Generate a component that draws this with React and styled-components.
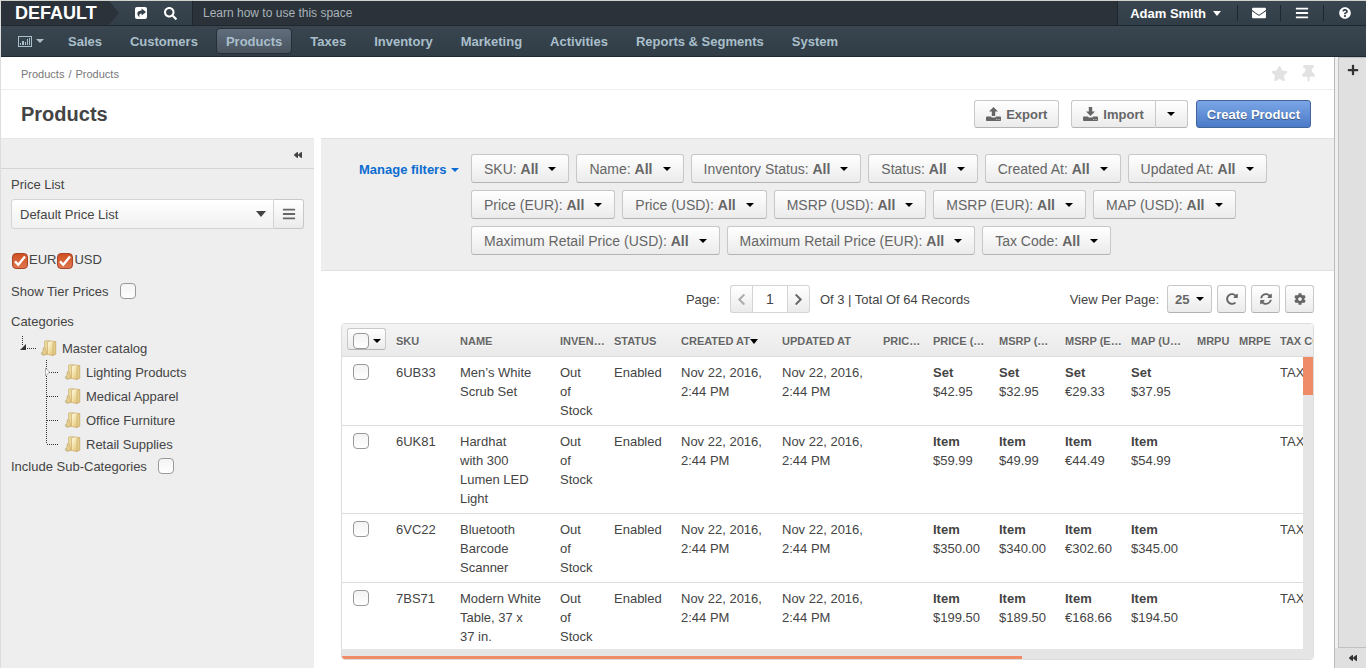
import React from "react";
import styled, { createGlobalStyle, css } from "styled-components";
import {
  FaSearch, FaEnvelope, FaBars, FaQuestionCircle, FaStar, FaThumbtack,
  FaPlus, FaCog, FaSyncAlt, FaRedoAlt, FaBackward, FaChevronLeft, FaChevronRight,
} from "react-icons/fa";

const Global = createGlobalStyle`
  *, *::before, *::after { box-sizing: border-box; }
  html, body { margin: 0; }
  body {
    font-family: "Liberation Sans", Arial, Helvetica, sans-serif;
    font-size: 13px;
    line-height: 19px;
    color: #444;
    background: #fff;
  }
  button, input, select { font: inherit; color: inherit; margin: 0; }
  a { color: inherit; text-decoration: none; }
  svg { display: block; flex: none; }
`;

/* ---------- shared controls ---------- */

const raised = css`
  border: 1px solid #c8c8c8;
  border-bottom-color: #b3b3b3;
  background: linear-gradient(#fff, #ebebeb);
`;

const Caret = styled.span`
  flex: none;
  width: 0;
  height: 0;
  border: solid transparent;
  border-width: 4px 4px 0;
  border-top-color: ${(p) => p.$color || "#000"};
`;

const Button = styled.button`
  ${raised}
  display: inline-flex;
  align-items: center;
  justify-content: center;
  gap: 5px;
  height: 28px;
  padding: 0 11px;
  border-radius: 3px;
  font-weight: bold;
  color: #666;
  white-space: nowrap;
`;

const PrimaryButton = styled(Button)`
  padding: 0 10px;
  color: #fff;
  border-color: #41659b;
  background: linear-gradient(#7ba5e6, #4b7bc8);
  text-shadow: 0 1px 1px rgba(0, 0, 0, 0.4);
`;

const SplitButton = styled.div`
  display: flex;
  & > :first-child { border-radius: 3px 0 0 3px; }
  & > :last-child { border-radius: 0 3px 3px 0; border-left: 0; }
`;

const CaretButton = styled(Button)`
  width: 32px;
  padding: 0;
`;

const BoxWrap = styled.span`
  display: inline-grid;
  flex: none;
  width: 16px;
  height: 16px;
  & > * { grid-area: 1 / 1; }
  svg { place-self: center; pointer-events: none; }
`;

const BoxInput = styled.input`
  appearance: none;
  width: 16px;
  height: 16px;
  border: 1px solid #999;
  border-radius: 4px;
  background: linear-gradient(#f3f3f3, #fff);
  &:checked {
    border-color: #a8452a;
    background: linear-gradient(#cf5022, #e0764f);
  }
`;

function CheckBox({ id, checked, label }) {
  return (
    <BoxWrap>
      <BoxInput id={id} type="checkbox" defaultChecked={checked} aria-label={label} />
      {checked && (
        <svg width="12" height="12" viewBox="0 0 12 12" fill="none" stroke="#fff" strokeWidth="2.4">
          <path d="M1 6.4 4.3 9.8 11 1.6" />
        </svg>
      )}
    </BoxWrap>
  );
}

/* ---------- drawings ---------- */

const ShareIcon = () => (
  <svg width="12" height="12" viewBox="0 0 12 12">
    <rect width="12" height="12" rx="2" fill="#fff" />
    <path d="M6.6 1.4 11 5 6.6 8.4V6.4C4.8 6.2 3.8 7.4 4.6 10.2 1.2 8 1.6 3.6 6.6 3.5Z" fill="#35424b" />
  </svg>
);

const ChartIcon = () => (
  <svg width="14" height="11" viewBox="0 0 14 11" fill="#a9bfcb">
    <path d="M0 0h14v11H0zM1 1v9h12V1z" fillRule="evenodd" />
    <path d="M2 7h1v2H2zM4 5h2v4H4zM7 6h1v3H7zM9 3h1v6H9zM11 2h1v7h-1z" />
  </svg>
);

const TrayIcon = ({ up }) => (
  <svg width="15" height="14" viewBox="0 0 15 14" fill="#666">
    <path d={up ? "M7.5 0 12 4.6H9.2V9H5.8V4.6H3Z" : "M5.8 0h3.4v4.4H12L7.5 9 3 4.4h2.8Z"} />
    <path
      d="M.8 9.6h4l1 1h3.4l1-1h4q.8 0 .8.8v2.8q0 .8-.8.8H.8q-.8 0-.8-.8v-2.8q0-.8.8-.8ZM10.2 12v.8h1V12ZM12.5 12v.8h1V12Z"
      fillRule="evenodd"
    />
  </svg>
);

const FolderIcon = () => (
  <svg width="16" height="16" viewBox="0 0 16 16">
    <defs>
      <linearGradient id="folder" x1="0" y1="0" x2="1" y2="1">
        <stop offset="0" stopColor="#fffbe2" />
        <stop offset=".5" stopColor="#f0dda0" />
        <stop offset="1" stopColor="#d3b068" />
      </linearGradient>
    </defs>
    <path d="M0 12v2.5l3 1.5 2-1V12Z" fill="#b9b3a2" opacity=".6" />
    <path d="M3.5 1 8 .5V13l-4.5.5Z" fill="#ecd9a0" stroke="#c4a866" strokeWidth=".6" />
    <path d="M3 7.5q1.6 0 1.6 1.6.2 1.4 1.2 2.2v3.4H1q-.2-2.6 1-3.6-.6-3.6 1-3.6Z" fill="#e3cc8d" stroke="#bfa05a" strokeWidth=".5" />
    <path d="M6.5 2 9 1l5.5.5V14L12 15.5l-5.5-1Z" fill="url(#folder)" stroke="#c4a45c" strokeWidth=".6" />
    <path d="M12 3 14.8 1.6V14L12 15.4Z" fill="#e6cc8c" stroke="#c0a058" strokeWidth=".5" />
  </svg>
);

/* ---------- top bar ---------- */

const Page = styled.div`
  display: flex;
  flex-direction: column;
  min-height: 560px;
  height: 100vh;
  border-top: 1px solid #d2d2cc;
  border-left: 1px solid #ddd;
`;

const TopBar = styled.header`
  display: flex;
  flex: none;
  height: 25px;
  color: #fff;
  background: linear-gradient(#39464f, #323e47);
  border-bottom: 1px solid #1f272e;
`;

const Brand = styled.a`
  display: flex;
  align-items: center;
  width: 118px;
  padding-left: 14px;
  font-size: 18px;
  font-weight: bold;
  background: #2b3239;
  clip-path: polygon(0 0, 108px 0, 118px 50%, 108px 100%, 0 100%);
`;

const QuickTools = styled.div`
  display: flex;
  align-items: center;
  gap: 17px;
  width: 73px;
  padding-left: 16px;
`;

const IconButton = styled.button`
  display: grid;
  place-items: center;
  padding: 0;
  border: 0;
  background: none;
  color: ${(p) => p.$color || "#fff"};
`;

const Tip = styled.div`
  flex: 1;
  display: flex;
  align-items: center;
  padding-left: 10px;
  font-size: 12px;
  color: #a9b2b9;
  background: #2b3239;
  border: solid #1f272e;
  border-width: 0 1px;
`;

const UserTools = styled.div`
  display: flex;
  align-items: center;
`;

const UserButton = styled.button`
  display: flex;
  align-items: center;
  gap: 7px;
  height: 16px;
  padding: 0 16px 0 12px;
  border: 0;
  background: none;
  color: #fff;
  font-weight: bold;
`;

const UserCaret = styled(Caret)`
  border-width: 5px 4px 0;
`;

const ToolButton = styled(IconButton)`
  width: 43px;
  height: 16px;
  border-left: 1px solid #1f272e;
`;

const NavBar = styled.nav`
  display: flex;
  align-items: center;
  flex: none;
  height: 31px;
  padding-left: 17px;
  font-weight: bold;
  color: #a9bfcb;
  background: linear-gradient(#39464f, #313d46);
  border-bottom: 1px solid #1f2a33;
`;

const DashButton = styled.button`
  display: flex;
  align-items: center;
  gap: 4px;
  margin-right: 10px;
  padding: 0;
  border: 0;
  background: none;
`;

const NavLink = styled.a`
  display: flex;
  align-items: center;
  height: 26px;
  margin: 0 4px;
  padding: 0 9px;
  border: 1px solid transparent;
  border-radius: 4px;
  ${(p) => p.$active && css`
    background: linear-gradient(#606d7c, #4a545f);
    border-color: #262e36;
  `}
`;

/* ---------- page frame ---------- */

const Frame = styled.div`
  display: flex;
  flex: 1;
  min-height: 0;
`;

const Content = styled.main`
  display: flex;
  flex-direction: column;
  flex: 1;
  min-width: 0;
`;

const Crumbs = styled.div`
  display: flex;
  align-items: center;
  flex: none;
  gap: 4px;
  height: 33px;
  padding: 2px 17px 0 20px;
  font-size: 11px;
  color: #777;
  border-bottom: 1px solid #eee;
`;

const CrumbTools = styled.div`
  display: flex;
  align-items: center;
  gap: 12px;
  margin-left: auto;
  padding-bottom: 2px;
`;

const TitleRow = styled.div`
  display: flex;
  align-items: center;
  flex: none;
  gap: 8px;
  height: 48px;
  padding: 0 23px 0 20px;
`;

const Title = styled.h1`
  flex: 1;
  margin: 0;
  font-size: 20px;
  line-height: 24px;
  color: #444;
`;

const Import = styled(SplitButton)`
  margin-left: 4px;
`;

const Split = styled.div`
  display: flex;
  flex: 1;
  gap: 7px;
  min-height: 0;
`;

/* ---------- left panel ---------- */

const Side = styled.aside`
  flex: none;
  width: 313px;
  background: #eee;
  border-top: 1px solid #e6e6e6;
`;

const SideTop = styled.div`
  display: flex;
  align-items: center;
  justify-content: flex-end;
  height: 30px;
  padding: 2px 12px 0;
  border-bottom: 1px solid #d4d4d4;
`;

const SideBody = styled.div`
  display: flex;
  flex-direction: column;
  padding: 6px 10px;
`;

const PriceList = styled.div`
  display: flex;
  margin-top: 5px;
  margin-bottom: 20px;
`;

const SelectWrap = styled.span`
  position: relative;
  display: inline-flex;
  ${(p) => p.$grow && "flex: 1;"}
`;

const SelectCaret = styled(Caret)`
  position: absolute;
  right: 8px;
  top: 12px;
  border-width: ${(p) => (p.$large ? "6px 5px 0" : "4px 4px 0")};
  pointer-events: none;
`;

const PriceSelect = styled.select`
  appearance: none;
  flex: 1;
  height: 30px;
  padding: 0 8px;
  border: 1px solid #d4d4d4;
  border-radius: 3px 0 0 3px;
  background: linear-gradient(#fff, #f1f1f1);
`;

const ListButton = styled(Button)`
  width: 30px;
  height: 30px;
  padding: 0;
  border-color: #c8c8c8;
  border-left: 0;
  border-radius: 0 3px 3px 0;
`;

const CheckLine = styled.div`
  display: flex;
  align-items: center;
  height: 20px;
`;

const Currencies = styled(CheckLine)`
  gap: 1px;
  padding-left: 1px;
  margin-bottom: 12px;
  ${BoxWrap} { margin-top: 4px; }
`;

const Option = styled(CheckLine)`
  gap: 11px;
`;

const SideLabel = styled.div`
  margin-top: 11px;
`;

const Tree = styled.ul`
  margin: 0;
  padding: 0;
  list-style: none;
`;

const Root = styled(Tree)`
  margin: 5px 0 0 9px;
`;

const Branch = styled(Tree)`
  padding-left: 24px;
`;

const Node = styled.a`
  display: flex;
  align-items: center;
  gap: 5px;
  height: 24px;
`;

const TreeLines = ({ kind }) => (
  <svg width="16" height="24" viewBox="0 0 16 24">
    <g stroke="#333" strokeDasharray="1 1" fill="none">
      <path d={kind === "root" ? "M2.5 0v10" : kind === "last" ? "M2.5 0v12" : "M2.5 0v24"} />
      <path d={kind === "root" ? "M7 12.5h9" : "M3 12.5h12"} />
    </g>
    {kind === "root" && <path d="M6 8v6H0Z" fill="#333" />}
    {kind === "closed" && <path d="M1.5 8v8l4-4Z" fill="#fff" stroke="#999" strokeWidth=".8" />}
  </svg>
);

/* ---------- grid panel ---------- */

const Main = styled.section`
  display: flex;
  flex-direction: column;
  flex: 1;
  min-width: 0;
`;

const Filters = styled.div`
  display: flex;
  flex: none;
  padding: 15px 20px 15px 38px;
  background: #eee;
  border: solid #e0e0e0;
  border-width: 1px 0;
`;

const ManageButton = styled.button`
  display: flex;
  align-items: center;
  gap: 5px;
  flex: none;
  width: 112px;
  height: 29px;
  padding: 2px 0 0;
  border: 0;
  background: none;
  color: #0a6cd0;
  font-weight: bold;
`;

const FilterList = styled.div`
  display: flex;
  flex-wrap: wrap;
  gap: 7px;
`;

const FilterButton = styled.button`
  ${raised}
  display: flex;
  align-items: center;
  gap: 10px;
  height: 29px;
  padding: 1px 12px 0;
  border-radius: 3px;
  font-size: 14px;
  color: #666;
  white-space: nowrap;
`;

const Toolbar = styled.div`
  display: flex;
  align-items: center;
  flex: none;
  gap: 5px;
  padding: 14px 20px 10px;
`;

const Pager = styled.div`
  display: flex;
  align-items: center;
  gap: 10px;
  margin: 0 auto;
  padding-left: 250px;
`;

const PagerBox = styled.div`
  display: flex;
  & > button { width: 22px; padding: 0; border-color: #d4d4d4; }
  & > :first-child { border-right: 0; border-radius: 3px 0 0 3px; color: #aaa; }
  & > :last-child { border-left: 0; border-radius: 0 3px 3px 0; }
`;

const PageInput = styled.input`
  width: 36px;
  height: 28px;
  border: 1px solid #d4d4d4;
  text-align: center;
  font-size: 14px;
`;

const SizeSelect = styled.select`
  ${raised}
  appearance: none;
  width: 45px;
  height: 28px;
  margin-left: 3px;
  padding: 0 7px;
  border-radius: 3px;
  font-weight: bold;
  color: #666;
`;

const SquareButton = styled(Button)`
  width: 29px;
  padding: 0;
`;

const GridBox = styled.div`
  position: relative;
  display: flex;
  flex-direction: column;
  flex: 1;
  min-height: 0;
  margin: 0 20px 8px;
  border: 1px solid #ddd;
  border-radius: 4px;
  overflow: hidden;
`;

const Scroller = styled.div`
  flex: 1;
  min-height: 0;
  overflow: hidden;
`;

const Table = styled.table`
  width: 1031px;
  table-layout: fixed;
  border-collapse: separate;
  border-spacing: 0;
`;

const Th = styled.th`
  height: 33px;
  padding: 2px 2px 0 7px;
  overflow: hidden;
  text-align: left;
  text-overflow: ellipsis;
  white-space: nowrap;
  font-size: 11px;
  color: #666;
  text-shadow: 0 1px 0 #fff;
  background: linear-gradient(#f4f4f4, #eaeaea);
  border-bottom: 1px solid #ddd;
`;

const SortMark = styled.span`
  display: inline-block;
  vertical-align: 1px;
  border: solid transparent;
  border-width: 5px 4px 0;
  border-top-color: #000;
`;

const Td = styled.td`
  padding: 6px 2px 5px 7px;
  vertical-align: top;
  white-space: pre-line;
  border-bottom: 1px solid #ddd;
`;

const PickTd = styled(Td)`
  padding: 7px 0 0 11px;
  line-height: 0;
`;

const PickAll = styled.div`
  ${raised}
  display: flex;
  align-items: center;
  gap: 4px;
  width: 39px;
  height: 22px;
  margin-left: -2px;
  margin-top: -5px;
  padding: 4px 0 0 5px;
  border-radius: 3px;
`;

const VTrack = styled.div`
  position: absolute;
  top: 33px;
  right: 0;
  bottom: 10px;
  width: 10px;
  background: #e5e5e5;
`;

const VThumb = styled.div`
  height: 38px;
  background: #f08b67;
`;

const HTrack = styled.div`
  flex: none;
  height: 10px;
  padding-top: 7px;
  background: #e5e5e5;
`;

const HThumb = styled.div`
  width: 70%;
  height: 3px;
  background: #f08b67;
`;

/* ---------- right rail ---------- */

const Rail = styled.aside`
  display: flex;
  flex-direction: column;
  flex: none;
  width: 32px;
  background: #e0e0e0;
  border-left: 1px solid #bbb;
`;

const RailBody = styled.div`
  display: flex;
  justify-content: center;
  flex: 1;
  align-items: flex-start;
  margin-left: 3px;
  padding-top: 6px;
  border: solid #c0c0c0;
  border-width: 1px 0 1px 1px;
  box-shadow: -3px 0 0 #f0eff2;
`;

const RailFoot = styled.div`
  display: flex;
  align-items: center;
  justify-content: center;
  height: 20px;
  padding-left: 5px;
`;

/* ---------- data ---------- */

const NAV = ["Sales", "Customers", "Products", "Taxes", "Inventory", "Marketing", "Activities", "Reports & Segments", "System"];

const FILTERS = [
  "SKU", "Name", "Inventory Status", "Status", "Created At", "Updated At",
  "Price (EUR)", "Price (USD)", "MSRP (USD)", "MSRP (EUR)", "MAP (USD)",
  "Maximum Retail Price (USD)", "Maximum Retail Price (EUR)", "Tax Code",
];

const CATEGORIES = [
  ["Lighting Products", "closed"],
  ["Medical Apparel", "mid"],
  ["Office Furniture", "mid"],
  ["Retail Supplies", "last"],
];

const COLUMNS = [
  ["SKU", 64], ["NAME", 100], ["INVENTORY STATUS", 54], ["STATUS", 67],
  ["CREATED AT", 101, true], ["UPDATED AT", 101], ["PRICE (EUR)", 50],
  ["PRICE (USD)", 66], ["MSRP (USD)", 66], ["MSRP (EUR)", 66], ["MAP (USD)", 66],
  ["MRPU", 42], ["MRPE", 41], ["TAX CODE", 100],
];

const ROWS = [
  ["6UB33", "Men’s White\nScrub Set", "Set", ["$42.95", "$32.95", "€29.33", "$37.95"]],
  ["6UK81", "Hardhat\nwith 300\nLumen LED\nLight", "Item", ["$59.99", "$49.99", "€44.49", "$54.99"]],
  ["6VC22", "Bluetooth\nBarcode\nScanner", "Item", ["$350.00", "$340.00", "€302.60", "$345.00"]],
  ["7BS71", "Modern White\nTable, 37 x\n37 in.", "Item", ["$199.50", "$189.50", "€168.66", "$194.50"]],
];

const DATE = "Nov 22, 2016,\n2:44 PM";

export default function App() {
  return (
    <Page>
      <Global />
      <TopBar>
        <Brand href="#">DEFAULT</Brand>
        <QuickTools>
          <IconButton aria-label="Shortcuts"><ShareIcon /></IconButton>
          <IconButton aria-label="Search"><FaSearch size={13} /></IconButton>
        </QuickTools>
        <Tip>Learn how to use this space</Tip>
        <UserTools>
          <UserButton>Adam Smith <UserCaret $color="#fff" /></UserButton>
          <ToolButton aria-label="Mail"><FaEnvelope size={14} /></ToolButton>
          <ToolButton aria-label="Menu"><FaBars size={14} /></ToolButton>
          <ToolButton aria-label="Help"><FaQuestionCircle size={12} /></ToolButton>
        </UserTools>
      </TopBar>
      <NavBar>
        <DashButton aria-label="Dashboards"><ChartIcon /><Caret $color="#a9bfcb" /></DashButton>
        {NAV.map((n) => <NavLink key={n} href="#" $active={n === "Products"}>{n}</NavLink>)}
      </NavBar>
      <Frame>
        <Content>
          <Crumbs>
            <a href="#">Products</a><span>/</span><span>Products</span>
            <CrumbTools>
              <IconButton aria-label="Favorite" $color="#e2e2e2"><FaStar size={17} /></IconButton>
              <IconButton aria-label="Pin" $color="#e2e2e2"><FaThumbtack size={17} /></IconButton>
            </CrumbTools>
          </Crumbs>
          <TitleRow>
            <Title>Products</Title>
            <Button><TrayIcon up />Export</Button>
            <Import>
              <Button><TrayIcon />Import</Button>
              <CaretButton aria-label="Import options"><Caret /></CaretButton>
            </Import>
            <PrimaryButton>Create Product</PrimaryButton>
          </TitleRow>
          <Split>
            <Side>
              <SideTop><IconButton aria-label="Collapse" $color="#444"><FaBackward size={8} /></IconButton></SideTop>
              <SideBody>
                <label htmlFor="price-list">Price List</label>
                <PriceList>
                  <SelectWrap $grow>
                    <PriceSelect id="price-list"><option>Default Price List</option></PriceSelect>
                    <SelectCaret $large $color="#444" />
                  </SelectWrap>
                  <ListButton aria-label="Choose price list"><FaBars size={14} /></ListButton>
                </PriceList>
                <Currencies>
                  <CheckBox id="eur" checked /><label htmlFor="eur">EUR</label>
                  <CheckBox id="usd" checked /><label htmlFor="usd">USD</label>
                </Currencies>
                <Option><label htmlFor="tier">Show Tier Prices</label><CheckBox id="tier" /></Option>
                <SideLabel>Categories</SideLabel>
                <Root>
                  <li>
                    <Node href="#"><TreeLines kind="root" /><FolderIcon />Master catalog</Node>
                    <Branch>
                      {CATEGORIES.map(([name, kind]) => (
                        <li key={name}><Node href="#"><TreeLines kind={kind} /><FolderIcon />{name}</Node></li>
                      ))}
                    </Branch>
                  </li>
                </Root>
                <Option><label htmlFor="sub">Include Sub-Categories</label><CheckBox id="sub" /></Option>
              </SideBody>
            </Side>
            <Main>
              <Filters>
                <ManageButton>Manage filters <Caret $color="#0a6cd0" /></ManageButton>
                <FilterList>
                  {FILTERS.map((f) => (
                    <FilterButton key={f}><span>{f}: <b>All</b></span><Caret /></FilterButton>
                  ))}
                </FilterList>
              </Filters>
              <Toolbar>
                <Pager>
                  <label htmlFor="page">Page:</label>
                  <PagerBox>
                    <Button aria-label="Previous page"><FaChevronLeft size={13} /></Button>
                    <PageInput id="page" defaultValue="1" />
                    <Button aria-label="Next page"><FaChevronRight size={13} /></Button>
                  </PagerBox>
                  <span>Of 3 | Total Of 64 Records</span>
                </Pager>
                <label htmlFor="size">View Per Page:</label>
                <SelectWrap>
                  <SizeSelect id="size"><option>25</option></SizeSelect>
                  <SelectCaret />
                </SelectWrap>
                <SquareButton aria-label="Reset"><FaRedoAlt size={12} /></SquareButton>
                <SquareButton aria-label="Refresh"><FaSyncAlt size={12} /></SquareButton>
                <SquareButton aria-label="Grid settings"><FaCog size={12} /></SquareButton>
              </Toolbar>
              <GridBox>
                <Scroller>
                  <Table>
                    <colgroup>
                      <col width="47" />
                      {COLUMNS.map(([n, w]) => <col key={n} width={w} />)}
                    </colgroup>
                    <thead>
                      <tr>
                        <Th><PickAll><CheckBox label="Select all" /><Caret /></PickAll></Th>
                        {COLUMNS.map(([n, w, sorted]) => <Th key={n}>{n}{sorted && <SortMark />}</Th>)}
                      </tr>
                    </thead>
                    <tbody>
                      {ROWS.map(([sku, name, unit, prices]) => (
                        <tr key={sku}>
                          <PickTd><CheckBox label={"Select " + sku} /></PickTd>
                          <Td>{sku}</Td>
                          <Td>{name}</Td>
                          <Td>{"Out\nof\nStock"}</Td>
                          <Td>Enabled</Td>
                          <Td>{DATE}</Td>
                          <Td>{DATE}</Td>
                          <Td />
                          {prices.map((p, i) => <Td key={i}><b>{unit}</b>{"\n" + p}</Td>)}
                          <Td />
                          <Td />
                          <Td>TAXABLE</Td>
                        </tr>
                      ))}
                    </tbody>
                  </Table>
                </Scroller>
                <VTrack><VThumb /></VTrack>
                <HTrack><HThumb /></HTrack>
              </GridBox>
            </Main>
          </Split>
        </Content>
        <Rail>
          <RailBody><IconButton aria-label="Add widget" $color="#333"><FaPlus size={12} /></IconButton></RailBody>
          <RailFoot><IconButton aria-label="Expand" $color="#333"><FaBackward size={8} /></IconButton></RailFoot>
        </Rail>
      </Frame>
    </Page>
  );
}
